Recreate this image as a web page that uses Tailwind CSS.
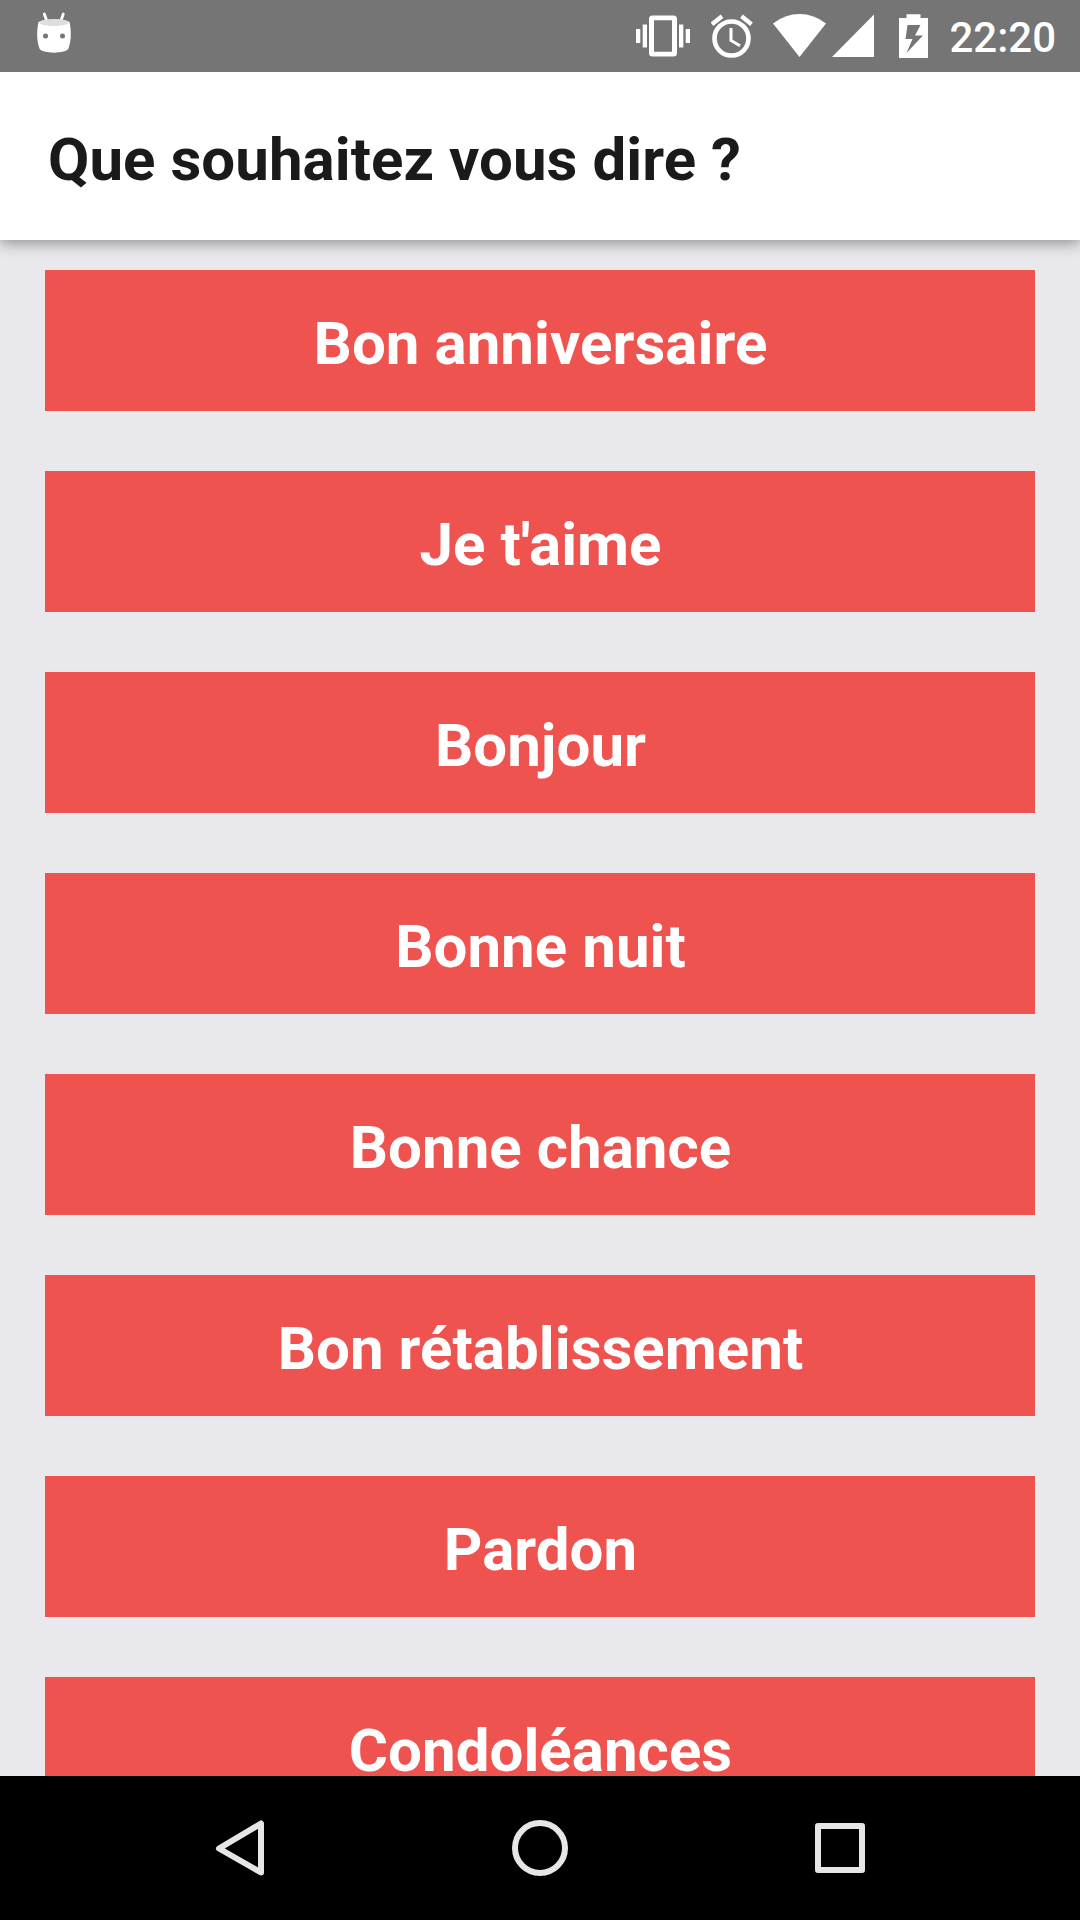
<!DOCTYPE html>
<html lang="fr">
<head>
    <meta charset="UTF-8">
    <meta name="viewport" content="width=device-width, initial-scale=1.0">
    <title>Que souhaitez vous dire ?</title>
    <script src="https://cdn.jsdelivr.net/npm/@tailwindcss/browser@4"></script>
</head>
<body class="bg-[#e9e8ed] font-['Roboto',sans-serif]">
    <div class="w-[1080px] h-[1920px] flex flex-col overflow-hidden">

        <!-- Status bar -->
        <div class="h-[72px] shrink-0 bg-[#757575] flex items-center text-white z-10">
            <svg class="w-9 h-[72px] ml-9" viewBox="0 0 36 72" fill="none">
                <path d="M8.300 14l2.500 7M27.300 14l-2.500 7" stroke="#fff" stroke-width="2.800" stroke-linecap="round"/>
                <path d="M2.500 22C7 18.500 29 18.500 33.500 22C35.500 31 35.300 41 32.500 48.500C30.500 54 5.500 54 3.500 48.500C.7 41 .5 31 2.500 22Z" fill="#fff"/>
                <ellipse cx="18" cy="22.500" rx="14.500" ry="3.500" fill="#dedede"/>
                <circle cx="9.500" cy="36" r="2.500" fill="#757575"/>
                <circle cx="26.500" cy="36" r="2.500" fill="#757575"/>
            </svg>

            <div class="ml-auto flex items-center">
                <!-- Vibrate -->
                <svg class="w-[54px] h-[72px]" viewBox="0 0 54 72" fill="#fff">
                    <path d="M0 29h4.300v14H0zM6.700 24.500H11V47.500H6.700zM43 24.500h4.300V47.500H43zM49.700 29H54v14h-4.300z"/>
                    <path fill-rule="evenodd" d="M16.500 15.500h21a3.500 3.500 0 0 1 3.500 3.500v34a3.500 3.500 0 0 1-3.500 3.500h-21a3.500 3.500 0 0 1-3.500-3.500V19a3.500 3.500 0 0 1 3.500-3.500zM18 20.300v31.400h18V20.300z"/>
                </svg>
                <!-- Alarm -->
                <svg class="w-[42px] h-[72px] ml-[21px]" viewBox="0 0 42 72" fill="none" stroke="#fff">
                    <circle cx="20.500" cy="38.500" r="17" stroke-width="4.600"/>
                    <path d="M1 24.200L11 16.300M30.500 16.300L40.500 24.200" stroke-width="4.300"/>
                    <path d="M20 28v12.500l9 5.200" stroke-width="3"/>
                </svg>
                <!-- Wifi -->
                <svg class="w-[54px] h-[72px] ml-5" viewBox="0 0 54 72" fill="#fff">
                    <path d="M0 23.500Q12 14 26.500 14T53 23.500L26.500 57z"/>
                </svg>
                <!-- Signal -->
                <svg class="w-[42px] h-[72px] ml-[5px]" viewBox="0 0 42 72" fill="#fff">
                    <path d="M0 57L42 14.500V57z"/>
                </svg>
                <!-- Battery -->
                <svg class="w-[29px] h-[72px] ml-[25px]" viewBox="0 0 29 72" fill="#fff">
                    <path fill-rule="evenodd" d="M7.500 14.300h14V18H29v40H0V18h7.500zM8.500 25L6.500 39h7L7.500 53L24 35.500h-8L21.500 25z"/>
                </svg>
                <span class="ml-[21px] mr-6 pt-1 text-[42px] leading-[50px] font-medium">22:20</span>
            </div>
        </div>

        <!-- Header -->
        <div class="h-[168px] shrink-0 bg-white flex items-center pl-12 pt-[7px] shadow-[0_4px_13px_rgba(0,0,0,0.36)]">
            <h1 class="text-[60px] leading-[70px] font-bold tracking-[0.05px] text-[#1a1a1a]">Que souhaitez vous dire ?</h1>
        </div>

        <!-- Messages -->
        <div class="flex-1 min-h-0 overflow-hidden -mt-px pt-px -z-10">
            <div class="flex flex-col gap-[60px] px-[45px] pt-[30px] text-[60px] leading-[70px] font-bold tracking-[0.05px] text-white">
                <button class="h-[141px] shrink-0 bg-[#ef5350] pt-[7px] pl-px">Bon anniversaire</button>
                <button class="h-[141px] shrink-0 bg-[#ef5350] pt-[7px] pl-px">Je t'aime</button>
                <button class="h-[141px] shrink-0 bg-[#ef5350] pt-[7px] pl-px">Bonjour</button>
                <button class="h-[141px] shrink-0 bg-[#ef5350] pt-[7px] pl-px">Bonne nuit</button>
                <button class="h-[141px] shrink-0 bg-[#ef5350] pt-[7px] pl-px">Bonne chance</button>
                <button class="h-[141px] shrink-0 bg-[#ef5350] pt-[7px] pl-px">Bon rétablissement</button>
                <button class="h-[141px] shrink-0 bg-[#ef5350] pt-[7px] pl-px">Pardon</button>
                <button class="h-[141px] shrink-0 bg-[#ef5350] pt-[7px] pl-px">Condoléances</button>
            </div>
        </div>

        <!-- Navigation bar -->
        <div class="h-36 shrink-0 bg-black flex justify-center gap-[204px] items-center">
            <svg class="w-24 h-36" viewBox="0 0 96 144" fill="none" stroke="#e6e6e6" stroke-width="6" stroke-linejoin="round">
                <path d="M27 72.500L69 47.500V96.500z"/>
            </svg>
            <svg class="w-24 h-36" viewBox="0 0 96 144" fill="none" stroke="#e6e6e6" stroke-width="6">
                <circle cx="48" cy="72" r="25"/>
            </svg>
            <svg class="w-24 h-36" viewBox="0 0 96 144" fill="none" stroke="#e6e6e6" stroke-width="6" stroke-linejoin="round">
                <rect x="26" y="50" width="44" height="44"/>
            </svg>
        </div>
    </div>
</body>
</html>
